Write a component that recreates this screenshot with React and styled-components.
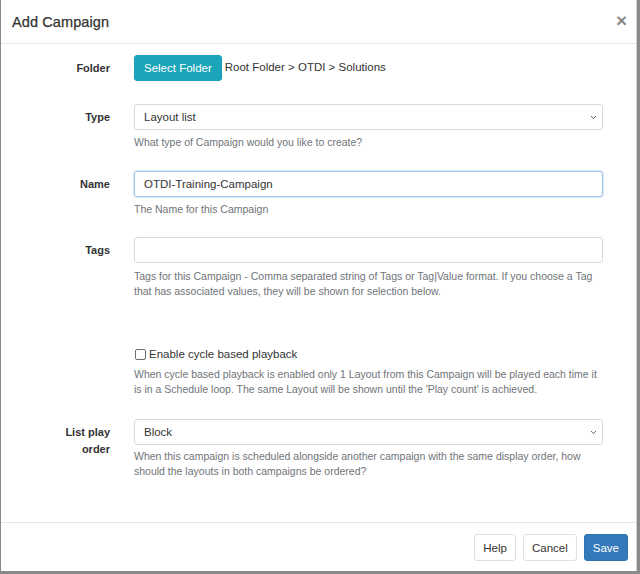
import React from "react";
import styled, { createGlobalStyle } from "styled-components";

const Global = createGlobalStyle`
  html, body { margin: 0; padding: 0; }
  body {
    background: #8a8a8a;
    font-family: "Liberation Sans", Arial, sans-serif;
    color: #333;
  }
`;

const Page = styled.div`
  width: 640px;
  height: 574px;
  display: flex;
  align-items: flex-start;
  background: #8a8a8a;
`;

const Modal = styled.div`
  box-sizing: border-box;
  margin-left: 1px;
  width: 636px;
  height: 571px;
  background: #fff;
  display: flex;
  flex-direction: column;
  border-right: 1px solid #d0d0d0;
`;

const Header = styled.div`
  box-sizing: border-box;
  height: 44px;
  border-bottom: 1px solid #e5e5e5;
  display: flex;
  align-items: center;
  justify-content: space-between;
  padding: 0 9px 0 11px;
  flex: none;
`;

const Title = styled.h4`
  margin: 0;
  font-size: 14.5px;
  font-weight: 400;
  color: #333;
  letter-spacing: 0.1px;
  -webkit-text-stroke: 0.25px #333;
`;

const Close = styled.span`
  font-size: 19px;
  font-weight: 700;
  line-height: 1;
  color: #8a8a8a;
  margin-top: -2px;
`;

const Body = styled.div`
  flex: 1;
  padding-top: 11px;
`;

const Group = styled.div`
  display: grid;
  grid-template-columns: 109px 469px;
  column-gap: 24px;
  margin-bottom: ${(p) => p.$mb || 0}px;
`;

const Label = styled.label`
  justify-self: end;
  text-align: right;
  max-width: 62px;
  padding-top: 5px;
  font-size: 11px;
  font-weight: 700;
  line-height: 17px;
  color: #333;
`;

const Control = styled.div`
  display: flex;
  flex-direction: column;
`;

const FolderLine = styled.div`
  display: flex;
  align-items: flex-start;
  gap: 3px;
`;

const TealButton = styled.button`
  height: 26px;
  padding: 0 9px;
  border: 1px solid #17a2b8;
  border-radius: 3px;
  background: #1ba5b9;
  color: #fff;
  font-family: inherit;
  font-size: 11.5px;
  line-height: 16px;
`;

const PathText = styled.span`
  font-size: 11.5px;
  line-height: 16px;
  padding-top: 4px;
  color: #333;
`;

const Field = styled.div`
  box-sizing: border-box;
  height: 26px;
  border: 1px solid ${(p) => (p.$focus ? "#9cc6ee" : "#d6dade")};
  box-shadow: ${(p) => (p.$focus ? "0 0 0 1px rgba(120,170,230,0.25)" : "none")};
  border-radius: 3px;
  padding: 4px 9px;
  font-size: 11.5px;
  line-height: 16px;
  color: #333;
  display: flex;
  align-items: center;
  justify-content: space-between;
`;

const Chevron = styled.svg`
  width: 7px;
  height: 5px;
  margin-right: -4px;
`;

const Help = styled.div`
  margin-top: ${(p) => p.$mt || 5}px;
  font-size: 10.5px;
  line-height: 14.5px;
  color: #6f7479;
`;

const CheckLine = styled.label`
  display: flex;
  align-items: center;
  gap: 3px;
  font-size: 11.5px;
  line-height: 17px;
  color: #333;
`;

const Box = styled.span`
  box-sizing: border-box;
  width: 11px;
  height: 11px;
  margin-left: 1px;
  border: 1px solid #6d6d6d;
  border-radius: 2px;
  background: #fff;
`;

const Footer = styled.div`
  box-sizing: border-box;
  flex: none;
  height: 49px;
  border-top: 1px solid #e5e5e5;
  display: flex;
  justify-content: flex-end;
  align-items: flex-start;
  gap: 7px;
  padding: 11px 8px 0 0;
`;

const Btn = styled.button`
  box-sizing: border-box;
  height: 27px;
  padding: 0 8px;
  border-radius: 3px;
  border: 1px solid ${(p) => (p.$primary ? "#2f73b0" : "#e0e0e0")};
  background: ${(p) => (p.$primary ? "#3479ba" : "#fff")};
  color: ${(p) => (p.$primary ? "#fff" : "#333")};
  font-family: inherit;
  font-size: 11.5px;
  line-height: 16px;
`;

const ChevronIcon = () => (
  <Chevron viewBox="0 0 7 5">
    <path d="M1 1 L3.5 3.6 L6 1" fill="none" stroke="#666" strokeWidth="1" />
  </Chevron>
);

export default function App() {
  return (
    <Page>
      <Global />
      <Modal>
        <Header>
          <Title>Add Campaign</Title>
          <Close>×</Close>
        </Header>
        <Body>
          <Group $mb={23}>
            <Label>Folder</Label>
            <Control>
              <FolderLine>
                <TealButton>Select Folder</TealButton>
                <PathText>Root Folder &gt; OTDI &gt; Solutions</PathText>
              </FolderLine>
            </Control>
          </Group>
          <Group $mb={21}>
            <Label>Type</Label>
            <Control>
              <Field>
                <span>Layout list</span>
                <ChevronIcon />
              </Field>
              <Help>What type of Campaign would you like to create?</Help>
            </Control>
          </Group>
          <Group $mb={21}>
            <Label>Name</Label>
            <Control>
              <Field $focus>
                <span>OTDI-Training-Campaign</span>
              </Field>
              <Help>The Name for this Campaign</Help>
            </Control>
          </Group>
          <Group $mb={48}>
            <Label>Tags</Label>
            <Control>
              <Field />
              <Help $mt={6}>
                Tags for this Campaign - Comma separated string of Tags or Tag|Value format. If you
                choose a Tag that has associated values, they will be shown for selection below.
              </Help>
            </Control>
          </Group>
          <Group $mb={23}>
            <span />
            <Control>
              <CheckLine>
                <Box />
                Enable cycle based playback
              </CheckLine>
              <Help $mt={4}>
                When cycle based playback is enabled only 1 Layout from this Campaign will be played
                each time it is in a Schedule loop. The same Layout will be shown until the 'Play
                count' is achieved.
              </Help>
            </Control>
          </Group>
          <Group>
            <Label>List play order</Label>
            <Control>
              <Field>
                <span>Block</span>
                <ChevronIcon />
              </Field>
              <Help $mt={4}>
                When this campaign is scheduled alongside another campaign with the same display
                order, how should the layouts in both campaigns be ordered?
              </Help>
            </Control>
          </Group>
        </Body>
        <Footer>
          <Btn>Help</Btn>
          <Btn>Cancel</Btn>
          <Btn $primary>Save</Btn>
        </Footer>
      </Modal>
    </Page>
  );
}
